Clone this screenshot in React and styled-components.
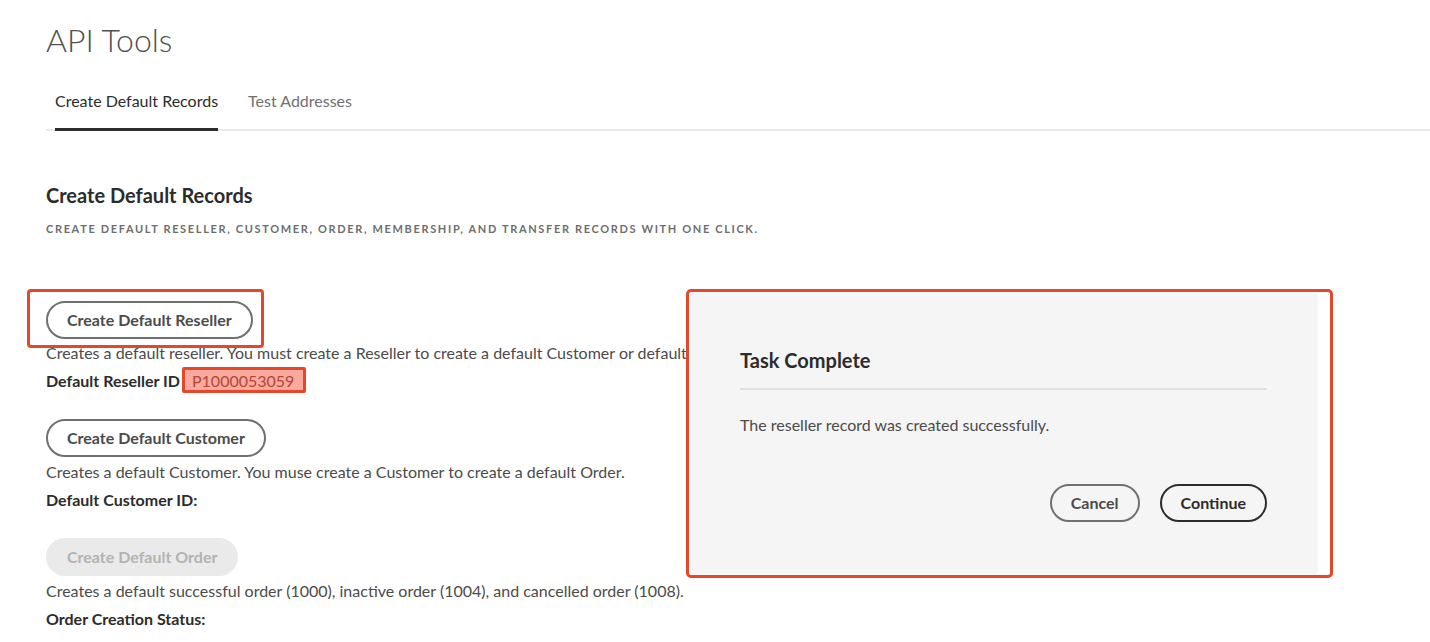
import React from 'react';
import styled, { createGlobalStyle } from 'styled-components';

const GlobalStyle = createGlobalStyle`
    html, body {
        margin: 0;
        padding: 0;
        background: #ffffff;
    }
    body {
        font-family: Lato, "Noto Sans", "Liberation Sans", sans-serif;
        color: #4b4b4b;
        -webkit-font-smoothing: antialiased;
    }
`

const annotate = '#e5472a'

const Page = styled.div`
    position: relative;
    padding-left: 46px;
    min-height: 642px;
    overflow: hidden;
`

const Title = styled.h1`
    margin: 20px 0 0;
    font-size: 32px;
    line-height: 40px;
    font-weight: 300;
    color: #505050;
`

const Tabs = styled.div`
    display: flex;
    gap: 30px;
    margin-top: 22px;
    padding-left: 9px;
    border-bottom: 2px solid #e9e9e9;
`

const Tab = styled.div`
    padding: 8px 0 16px;
    margin-bottom: -2px;
    font-size: 16px;
    line-height: 22px;
    color: ${p => (p.selected ? '#2c2c2c' : '#707070')};
    border-bottom: 3px solid ${p => (p.selected ? '#2c2c2c' : 'transparent')};
`

const Heading = styled.h2`
    margin: 51px 0 0;
    font-size: 20px;
    line-height: 26px;
    font-weight: 700;
    color: #2c2c2c;
`

const Subtitle = styled.div`
    margin-top: 13px;
    font-size: 11px;
    line-height: 16px;
    font-weight: 700;
    letter-spacing: 1.65px;
    text-transform: uppercase;
    color: #6e6e6e;
`

const Highlight = styled.div`
    display: inline-flex;
    margin: 52px 0 0 -19px;
    padding: 9px 8px 6px 16px;
    border: 3px solid ${annotate};
    border-radius: 4px;
`

const Button = styled.button`
    box-sizing: border-box;
    height: 38px;
    padding: 0 19px;
    border-radius: 19px;
    border: 2px solid ${p => (p.disabled ? '#eaeaea' : p.strong ? '#2c2c2c' : '#707070')};
    background: ${p => (p.disabled ? '#eaeaea' : 'transparent')};
    color: ${p => (p.disabled ? '#b3b3b3' : p.strong ? '#2c2c2c' : '#4b4b4b')};
    font-family: inherit;
    font-size: 16px;
    font-weight: 700;
    line-height: 1;
    cursor: ${p => (p.disabled ? 'default' : 'pointer')};
`

const Block = styled.div`
    margin-top: ${p => p.top || 0}px;
`

const Description = styled.div`
    margin-top: ${p => p.top}px;
    font-size: 16px;
    line-height: 22px;
    color: #4b4b4b;
    white-space: nowrap;
`

const IdRow = styled.div`
    display: flex;
    align-items: center;
    height: 26px;
    margin-top: 3px;
    font-size: 16px;
    font-weight: 700;
    color: #2c2c2c;
`

const IdValue = styled.span`
    box-sizing: border-box;
    height: 26px;
    display: inline-flex;
    align-items: center;
    margin-left: 2px;
    padding: 0 9px 0 7px;
    background: #f7aa9d;
    border: 3px solid ${annotate};
    border-radius: 2px;
    font-weight: 400;
    color: #b8443a;
`

const DialogFrame = styled.div`
    position: absolute;
    left: 686px;
    top: 289px;
    box-sizing: border-box;
    width: 647px;
    height: 289px;
    padding: 1px 12px 1px 1px;
    background: #ffffff;
    border: 3px solid ${annotate};
    border-radius: 5px;
    display: flex;
`

const Dialog = styled.div`
    flex: 1;
    padding: 54px 51px 0 50px;
    background: #f5f5f5;
    border-radius: 4px;
`

const DialogTitle = styled.div`
    font-size: 20px;
    line-height: 26px;
    font-weight: 700;
    color: #2c2c2c;
`

const Divider = styled.div`
    height: 2px;
    margin-top: 15px;
    background: #e1e1e1;
`

const DialogBody = styled.div`
    margin-top: 24px;
    font-size: 16px;
    line-height: 22px;
    color: #4b4b4b;
`

const DialogActions = styled.div`
    display: flex;
    justify-content: flex-end;
    gap: 20px;
    margin-top: 48px;
`

const records = [
    {
        key: 'customer',
        button: 'Create Default Customer',
        text: 'Creates a default Customer. You muse create a Customer to create a default Order.',
        label: 'Default Customer ID:',
    },
    {
        key: 'order',
        button: 'Create Default Order',
        text: 'Creates a default successful order (1000), inactive order (1004), and cancelled order (1008).',
        label: 'Order Creation Status:',
        disabled: true,
    },
]

export default function App() {
    return <>
        <GlobalStyle />
        <Page>
            <Title>API Tools</Title>
            <Tabs>
                <Tab selected>Create Default Records</Tab>
                <Tab>Test Addresses</Tab>
            </Tabs>

            <Heading>Create Default Records</Heading>
            <Subtitle>Create default reseller, customer, order, membership, and transfer records with one click.</Subtitle>

            <Highlight>
                <Button>Create Default Reseller</Button>
            </Highlight>
            <Description top={-6}>
                Creates a default reseller. You must create a Reseller to create a default Customer or default Order.
            </Description>
            <IdRow>
                Default Reseller ID<IdValue>P1000053059</IdValue>
            </IdRow>

            {records.map(r => (
                <Block key={r.key} top={26}>
                    <Button disabled={r.disabled}>{r.button}</Button>
                    <Description top={4}>{r.text}</Description>
                    <IdRow>{r.label}</IdRow>
                </Block>
            ))}

            <DialogFrame>
                <Dialog>
                    <DialogTitle>Task Complete</DialogTitle>
                    <Divider />
                    <DialogBody>The reseller record was created successfully.</DialogBody>
                    <DialogActions>
                        <Button>Cancel</Button>
                        <Button strong>Continue</Button>
                    </DialogActions>
                </Dialog>
            </DialogFrame>
        </Page>
    </>
}
